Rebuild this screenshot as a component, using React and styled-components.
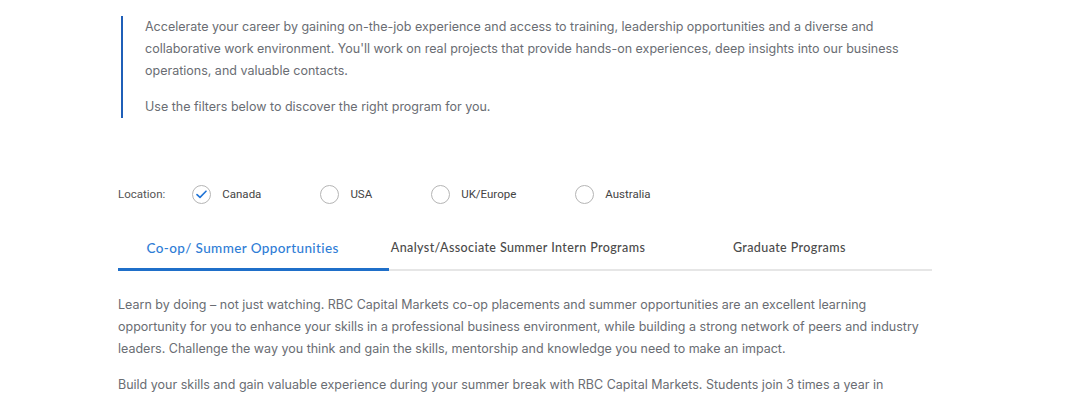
import React, { useState } from "react";
import styled, { createGlobalStyle } from "styled-components";

const GlobalStyle = createGlobalStyle`
    body {
        margin: 0;
        background: #ffffff;
        font-family: Inter, Roboto, "Liberation Sans", sans-serif;
    }
`;

const Page = styled.div`
    width: 814px;
    padding: 16px 0 0 118px;
`;

const Intro = styled.div`
    margin-left: 3px;
    padding-left: 22px;
    border-left: 2px solid #1f5fb8;
    max-width: 770px;
`;

const Text = styled.p`
    margin: 0 0 14px;
    font-family: Inter, Roboto, sans-serif;
    font-size: 12.5px;
    line-height: 22px;
    color: #6a6d73;
    &:last-child {
        margin-bottom: 0;
    }
`;

const LocationRow = styled.div`
    display: flex;
    align-items: center;
    height: 24px;
    margin-top: 64px;
    font-family: Roboto, sans-serif;
`;

const LocationLabel = styled.span`
    font-size: 11.5px;
    color: #555;
    margin-right: 27px;
`;

const Option = styled.label`
    display: flex;
    align-items: center;
    gap: 11px;
    margin-right: 59px;
    font-size: 11.5px;
    color: #444;
    cursor: pointer;
`;

const Circle = styled.span`
    width: 17px;
    height: 17px;
    border: 1px solid #b5b5b5;
    border-radius: 50%;
    display: flex;
    align-items: center;
    justify-content: center;
`;

const TabBar = styled.div`
    display: grid;
    grid-template-columns: repeat(3, minmax(0, 1fr));
    margin-top: 19px;
    border-bottom: 2px solid #e6e6e6;
`;

const Tab = styled.button`
    box-sizing: border-box;
    height: 46px;
    background: none;
    border: none;
    border-bottom: 3px solid ${(p) => (p.$active ? "#1f6fc9" : "transparent")};
    margin-bottom: -2px;
    padding: 2px ${(p) => (p.$active ? "22px" : "14px")} 0 0;
    white-space: nowrap;
    font-family: Lato, "Open Sans", sans-serif;
    font-size: ${(p) => (p.$active ? "13.5px" : "12.5px")};
    font-weight: 500;
    letter-spacing: 0.4px;
    color: ${(p) => (p.$active ? "#2f7dd6" : "#4a4a4a")};
    cursor: pointer;
`;

const Content = styled.div`
    margin-top: 23px;
`;

const locations = ["Canada", "USA", "UK/Europe", "Australia"];
const tabs = [
    "Co-op/ Summer Opportunities",
    "Analyst/Associate Summer Intern Programs",
    "Graduate Programs",
];

const Check = () => (
    <svg width="11" height="9" viewBox="0 0 11 9">
        <path d="M1 4.6 L4 7.4 L10 1.2" fill="none" stroke="#1f73d6" strokeWidth="1.6" strokeLinecap="round" strokeLinejoin="round" />
    </svg>
);

export default function App() {
    const [location, setLocation] = useState("Canada");
    const [tab, setTab] = useState(0);

    return (
        <>
            <GlobalStyle />
            <Page>
                <Intro>
                    <Text>
                        Accelerate your career by gaining on-the-job experience and access to training, leadership opportunities and a diverse and collaborative work environment. You'll work on real projects that provide hands-on experiences, deep insights into our business operations, and valuable contacts.
                    </Text>
                    <Text>Use the filters below to discover the right program for you.</Text>
                </Intro>

                <LocationRow>
                    <LocationLabel>Location:</LocationLabel>
                    {locations.map((loc) => (
                        <Option key={loc} onClick={() => setLocation(loc)}>
                            <Circle>{location === loc && <Check />}</Circle>
                            {loc}
                        </Option>
                    ))}
                </LocationRow>

                <TabBar>
                    {tabs.map((t, i) => (
                        <Tab key={t} $active={tab === i} onClick={() => setTab(i)}>
                            {t}
                        </Tab>
                    ))}
                </TabBar>

                <Content>
                    <Text>
                        Learn by doing – not just watching. RBC Capital Markets co-op placements and summer opportunities are an excellent learning opportunity for you to enhance your skills in a professional business environment, while building a strong network of peers and industry leaders. Challenge the way you think and gain the skills, mentorship and knowledge you need to make an impact.
                    </Text>
                    <Text>
                        Build your skills and gain valuable experience during your summer break with RBC Capital Markets. Students join 3 times a year in January, May and September.
                    </Text>
                </Content>
            </Page>
        </>
    );
}
